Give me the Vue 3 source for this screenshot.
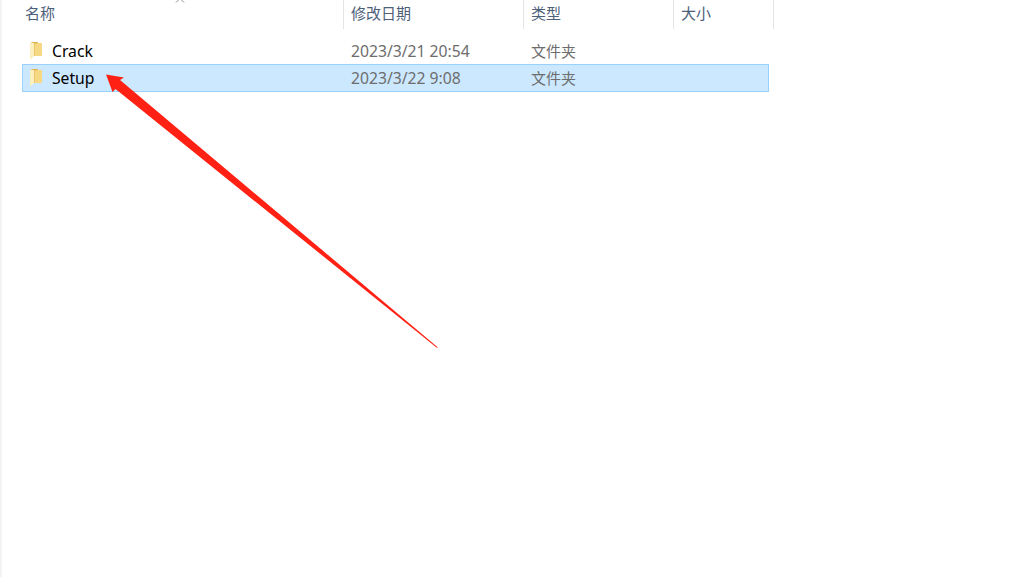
<template>
  <div class="explorer">
    <div class="header">
      <div class="col col-name">名称<svg class="sort-arrow" width="10" height="5" viewBox="0 0 10 5"><path d="M1 4.5 5 .5l4 4" fill="none" stroke="#8a8f96" stroke-width="1" /></svg></div>
      <div class="col col-date">修改日期</div>
      <div class="col col-type">类型</div>
      <div class="col col-size">大小</div>
    </div>
    <div class="rows">
      <div v-for="row in rows" :key="row.name" class="row" :class="{ selected: row.selected }">
        <div class="cell-name">
          <svg class="folder" width="12" height="17" viewBox="0 0 12 17">
            <path d="M3 1h9v13H3z" fill="#f6d885" />
            <path d="M0 1 3 0h5v1L3 2z" fill="#e2b44f" />
            <path d="M0 1h4v13l-3 3H0z" fill="#fdf0c0" />
            <path d="M4 2h1v12H4z" fill="#ecc76a" />
          </svg>
          <span>{{ row.name }}</span>
        </div>
        <div class="cell-date">{{ row.date }}</div>
        <div class="cell-type">文件夹</div>
      </div>
    </div>
    <svg class="arrow" width="1030" height="577" viewBox="0 0 1030 577">
      <path d="M438 347.5 120 80 124 77.5 106 74.5 112.5 92 115.5 89 436.5 347.5Z" fill="#ff2214" />
    </svg>
  </div>
</template>

<script setup>
const rows = [
  { name: 'Crack', date: '2023/3/21 20:54', selected: false },
  { name: 'Setup', date: '2023/3/22 9:08', selected: true }
]
</script>

<style>
html,
body {
  margin: 0;
  background: #ffffff;
}
</style>

<style scoped>
.explorer {
  position: relative;
  width: 1030px;
  height: 577px;
  box-sizing: border-box;
  overflow: hidden;
  background: #ffffff;
  border-left: 2px solid #f3f3f3;
  font-family: "Noto Sans CJK SC", "Liberation Sans", sans-serif;
  font-size: 15px;
}

.header {
  display: flex;
  height: 29px;
  color: #4c607a;
}

.col {
  position: relative;
  box-sizing: border-box;
  height: 29px;
  padding-left: 7px;
  line-height: 26px;
  border-right: 1px solid #e5e5e5;
}

.col-name {
  width: 342px;
  padding-left: 23px;
}

.col-date {
  width: 180px;
}

.col-type {
  width: 150px;
}

.col-size {
  width: 100px;
}

.sort-arrow {
  position: absolute;
  left: 173px;
  top: -2px;
}

.rows {
  display: flex;
  flex-direction: column;
  margin: 8px 0 0 20px;
  width: 747px;
}

.row {
  display: flex;
  box-sizing: border-box;
  height: 27px;
  align-items: center;
  border: 1px solid transparent;
  color: #6d6d6d;
}

.row.selected {
  height: 28px;
  background: #cce8ff;
  border-color: #99d1ff;
}

.cell-name {
  display: flex;
  align-items: center;
  width: 328px;
  padding-left: 7px;
  box-sizing: border-box;
  font-family: "Noto Sans", "Noto Sans CJK SC", sans-serif;
  font-size: 15.7px;
  color: #000000;
}

.folder {
  margin-right: 10px;
  margin-top: -1px;
}

.cell-date {
  width: 180px;
  font-family: "Noto Sans", sans-serif;
  font-size: 15.7px;
}

.cell-type {
  width: 150px;
  margin-top: -1px;
}

.arrow {
  position: absolute;
  left: -2px;
  top: 0;
  pointer-events: none;
}
</style>
